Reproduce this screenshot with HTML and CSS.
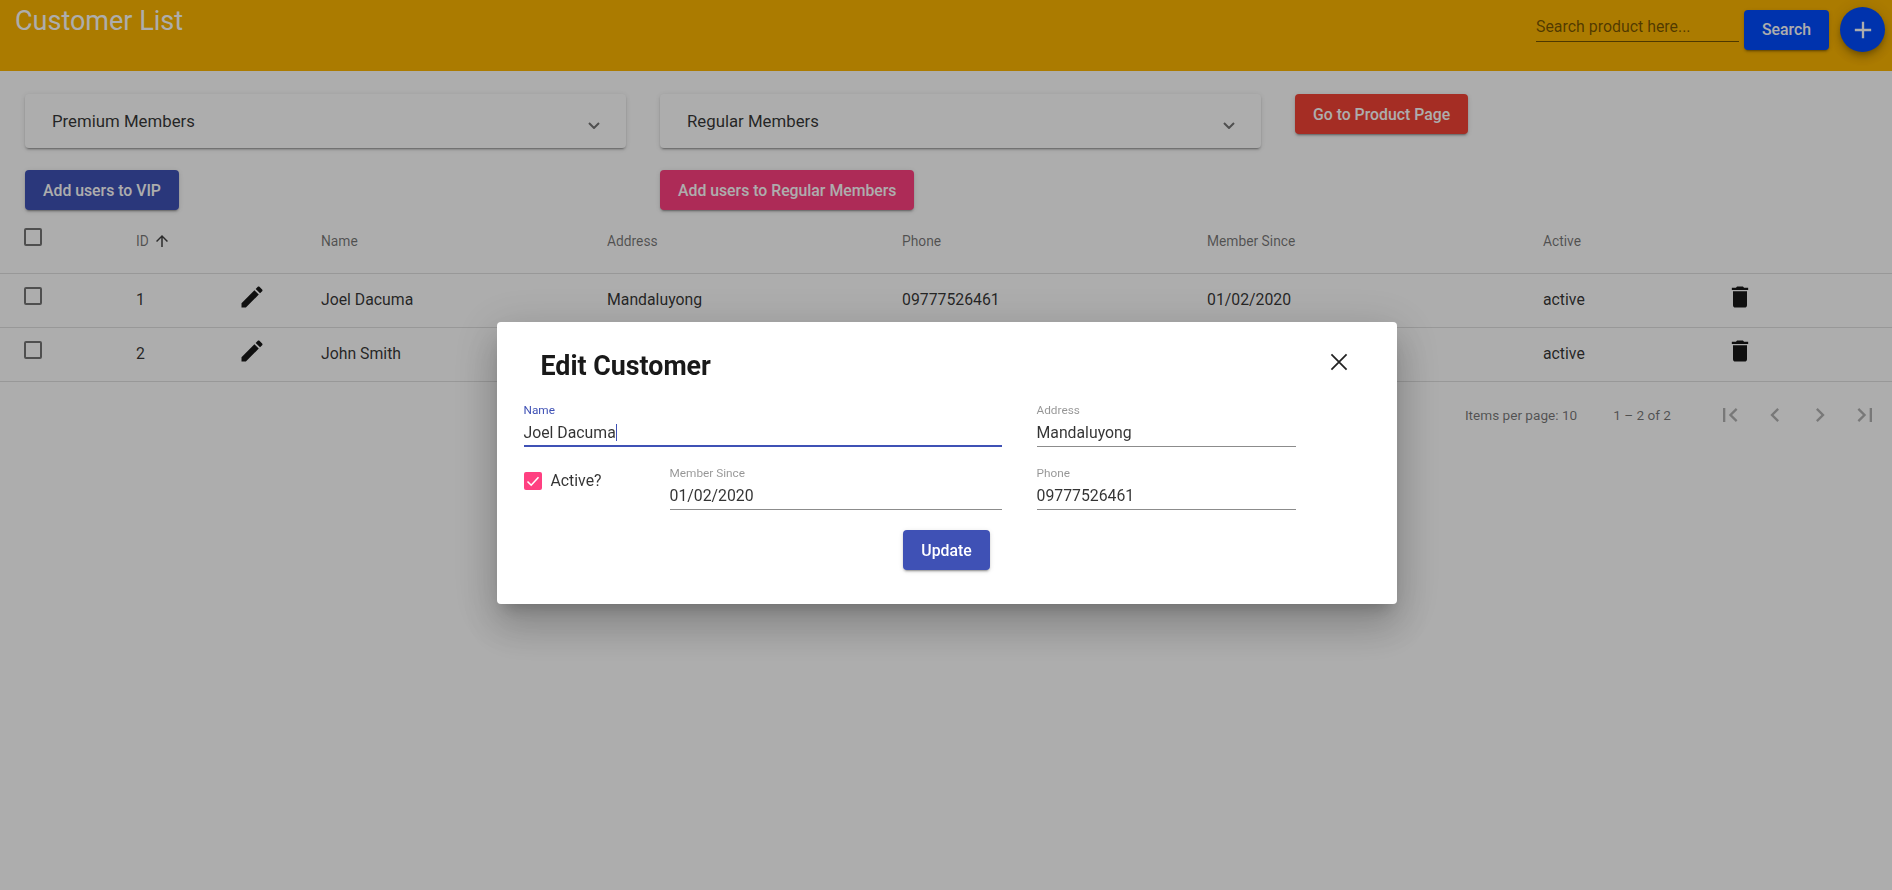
FILE: index.html
```html
<!DOCTYPE html>
<html lang="en">
<head>
    <meta charset="UTF-8">
    <meta name="viewport" content="width=device-width, initial-scale=1.0">
    <title>Customer List</title>
    <link rel="stylesheet" href="styles.css">
</head>
<body>
    <header class="toolbar">
        <h1 class="toolbar-title">Customer List</h1>
        <div class="toolbar-actions">
            <input class="search-input" type="text" placeholder="Search product here...">
            <button class="btn btn-search">Search</button>
            <button class="fab">
                <svg class="icon" viewBox="0 0 24 24"><path d="M19 13h-6v6h-2v-6H5v-2h6V5h2v6h6v2z"/></svg>
            </button>
        </div>
    </header>

    <section class="groups">
        <div class="panel">
            <span>Premium Members</span>
            <svg class="chevron" viewBox="0 0 12 7"><path d="M1 1l5 5 5-5"/></svg>
        </div>
        <div class="panel">
            <span>Regular Members</span>
            <svg class="chevron" viewBox="0 0 12 7"><path d="M1 1l5 5 5-5"/></svg>
        </div>
        <button class="btn btn-warn">Go to Product Page</button>
        <button class="btn btn-primary">Add users to VIP</button>
        <button class="btn btn-accent">Add users to Regular Members</button>
    </section>

    <table class="customers">
        <colgroup>
            <col class="col-check">
            <col class="col-id">
            <col class="col-edit">
            <col class="col-name">
            <col class="col-address">
            <col class="col-phone">
            <col class="col-since">
            <col class="col-active">
            <col>
        </colgroup>
        <thead>
            <tr>
                <th><span class="check"></span></th>
                <th>
                    <span class="sort">ID
                        <svg class="sort-icon" viewBox="0 0 24 24"><path d="M4 12l1.41 1.41L11 7.83V20h2V7.83l5.58 5.59L20 12l-8-8-8 8z"/></svg>
                    </span>
                </th>
                <th></th>
                <th>Name</th>
                <th>Address</th>
                <th>Phone</th>
                <th>Member Since</th>
                <th>Active</th>
                <th></th>
            </tr>
        </thead>
        <tbody>
            <tr>
                <td><span class="check"></span></td>
                <td>1</td>
                <td>
                    <svg class="icon row-icon" viewBox="0 0 24 24"><path d="M3 17.25V21h3.75L17.81 9.94l-3.75-3.75L3 17.25zM20.71 7.04c.39-.39.39-1.02 0-1.41l-2.34-2.34c-.39-.39-1.02-.39-1.41 0l-1.83 1.83 3.75 3.75 1.83-1.83z"/></svg>
                </td>
                <td>Joel Dacuma</td>
                <td>Mandaluyong</td>
                <td>09777526461</td>
                <td>01/02/2020</td>
                <td>active</td>
                <td>
                    <svg class="icon row-icon" viewBox="0 0 24 24"><path d="M6 19c0 1.1.9 2 2 2h8c1.1 0 2-.9 2-2V7H6v12zM19 4h-3.5l-1-1h-5l-1 1H5v2h14V4z"/></svg>
                </td>
            </tr>
            <tr>
                <td><span class="check"></span></td>
                <td>2</td>
                <td>
                    <svg class="icon row-icon" viewBox="0 0 24 24"><path d="M3 17.25V21h3.75L17.81 9.94l-3.75-3.75L3 17.25zM20.71 7.04c.39-.39.39-1.02 0-1.41l-2.34-2.34c-.39-.39-1.02-.39-1.41 0l-1.83 1.83 3.75 3.75 1.83-1.83z"/></svg>
                </td>
                <td>John Smith</td>
                <td></td>
                <td></td>
                <td></td>
                <td>active</td>
                <td>
                    <svg class="icon row-icon" viewBox="0 0 24 24"><path d="M6 19c0 1.1.9 2 2 2h8c1.1 0 2-.9 2-2V7H6v12zM19 4h-3.5l-1-1h-5l-1 1H5v2h14V4z"/></svg>
                </td>
            </tr>
        </tbody>
    </table>

    <div class="paginator">
        <span>Items per page: 10</span>
        <span class="range">1 – 2 of 2</span>
        <span class="page-btn"><svg class="icon" viewBox="0 0 24 24"><path d="M18.41 16.59L13.82 12l4.59-4.59L17 6l-6 6 6 6zM6 6h2v12H6z"/></svg></span>
        <span class="page-btn"><svg class="icon" viewBox="0 0 24 24"><path d="M15.41 7.41L14 6l-6 6 6 6 1.41-1.41L10.83 12z"/></svg></span>
        <span class="page-btn"><svg class="icon" viewBox="0 0 24 24"><path d="M10 6L8.59 7.41 13.17 12l-4.58 4.59L10 18l6-6z"/></svg></span>
        <span class="page-btn"><svg class="icon" viewBox="0 0 24 24"><path d="M5.59 7.41L10.18 12l-4.59 4.59L7 18l6-6-6-6zM16 6h2v12h-2z"/></svg></span>
    </div>

    <!-- Edit dialog -->
    <div class="backdrop">
        <div class="dialog">
            <div class="dialog-head">
                <h2 class="dialog-title">Edit Customer</h2>
                <svg class="close-icon" viewBox="0 0 24 24"><path d="M5.5 5.5l13 13M18.5 5.5l-13 13"/></svg>
            </div>
            <div class="dialog-form">
                <div class="field field-focus">
                    <label>Name</label>
                    <div class="field-value">Joel Dacuma<span class="caret"></span></div>
                </div>
                <div class="field">
                    <label>Address</label>
                    <div class="field-value">Mandaluyong</div>
                </div>
                <div class="active-row">
                    <div class="active-check">
                        <span class="check-on">
                            <svg viewBox="0 0 18 18"><path d="M3.5 9.5l3.7 3.7 7.3-8"/></svg>
                        </span>
                        <span>Active?</span>
                    </div>
                    <div class="field">
                        <label>Member Since</label>
                        <div class="field-value">01/02/2020</div>
                    </div>
                </div>
                <div class="field">
                    <label>Phone</label>
                    <div class="field-value">09777526461</div>
                </div>
            </div>
            <div class="dialog-actions">
                <button class="btn btn-primary">Update</button>
            </div>
        </div>
    </div>
</body>
</html>
```

FILE: styles.css
```css
body {
    font-family: Roboto, sans-serif;
    margin: 0;
    min-height: 100vh;
    background-color: #fff;
    color: rgba(0, 0, 0, 0.8);
    font-size: 15.8px;
    overflow: hidden;
}

.icon {
    display: block;
    width: 28px;
    height: 28px;
    fill: currentColor;
}

/* Toolbar */
.toolbar {
    display: flex;
    justify-content: space-between;
    align-items: flex-start;
    height: 71px;
    padding: 0 7px 0 15px;
    background-color: #fdb600;
    color: #fff;
}

.toolbar-title {
    margin: 5px 0 0;
    font-size: 27px;
    font-weight: 400;
    line-height: 32px;
}

.toolbar-actions {
    display: flex;
    align-items: center;
    padding-top: 7px;
}

.search-input {
    width: 203px;
    height: 30px;
    box-sizing: border-box;
    margin: 0 5px 5px 0;
    padding: 0;
    border: none;
    border-bottom: 1px solid rgba(0, 0, 0, 0.54);
    outline: none;
    background: transparent;
    font-family: inherit;
    font-size: 15.9px;
}

.search-input::placeholder {
    color: rgba(0, 0, 0, 0.54);
}

.btn {
    height: 40px;
    padding: 0 18px;
    border: none;
    border-radius: 4px;
    color: #fff;
    font-family: inherit;
    font-size: 15.8px;
    font-weight: 500;
    box-shadow: 0 3px 1px -2px rgba(0, 0, 0, 0.2), 0 2px 2px 0 rgba(0, 0, 0, 0.14), 0 1px 5px 0 rgba(0, 0, 0, 0.12);
}

.btn-search {
    width: 85px;
    padding: 0;
    background-color: #004cff;
}

.btn-primary {
    background-color: #3f51b5;
}

.btn-accent {
    background-color: #ff4081;
}

.btn-warn {
    background-color: #f44336;
}

.fab {
    display: flex;
    align-items: center;
    justify-content: center;
    width: 45px;
    height: 45px;
    margin-left: 11px;
    padding: 0;
    border: none;
    border-radius: 50%;
    background-color: #004cff;
    color: #fff;
    box-shadow: 0 3px 5px -1px rgba(0, 0, 0, 0.2), 0 6px 10px 0 rgba(0, 0, 0, 0.14), 0 1px 18px 0 rgba(0, 0, 0, 0.12);
}

/* Member groups */
.groups {
    display: grid;
    grid-template-columns: 601px 601px auto;
    justify-content: start;
    justify-items: start;
    align-items: start;
    column-gap: 34px;
    row-gap: 22px;
    padding: 23px 25px 0;
}

.panel {
    display: flex;
    align-items: center;
    justify-content: space-between;
    box-sizing: border-box;
    width: 100%;
    height: 54px;
    padding: 0 26px 0 27px;
    border-radius: 4px;
    background-color: #fff;
    font-size: 16.8px;
    box-shadow: 0 3px 1px -2px rgba(0, 0, 0, 0.2), 0 2px 2px 0 rgba(0, 0, 0, 0.14), 0 1px 5px 0 rgba(0, 0, 0, 0.12);
}

.chevron {
    width: 12px;
    height: 7px;
    margin-top: 8px;
    fill: none;
    stroke: rgba(0, 0, 0, 0.54);
    stroke-width: 2;
}

.groups .btn-primary,
.groups .btn-accent {
    grid-row: 2;
}

.groups .btn-accent {
    grid-column: 2;
}

/* Table */
.customers {
    width: 100%;
    border-collapse: collapse;
    table-layout: fixed;
}

.col-check { width: 136px; }
.col-id { width: 105px; }
.col-edit { width: 80px; }
.col-name { width: 286px; }
.col-address { width: 295px; }
.col-phone { width: 305px; }
.col-since { width: 336px; }
.col-active { width: 189px; }

.customers th,
.customers td {
    padding: 0;
    border-bottom: 1px solid rgba(0, 0, 0, 0.12);
    text-align: left;
}

.customers th {
    height: 61px;
    padding-bottom: 2px;
    color: rgba(0, 0, 0, 0.54);
    font-size: 13.8px;
    font-weight: 400;
}

.customers td {
    height: 50px;
    padding-bottom: 3px;
    font-size: 15.8px;
}

.customers th:first-child,
.customers td:first-child {
    padding-left: 24px;
}

.check {
    display: block;
    box-sizing: border-box;
    width: 18px;
    height: 18px;
    margin-bottom: 7px;
    border: 2px solid rgba(0, 0, 0, 0.54);
    border-radius: 2px;
}

.sort {
    display: flex;
    align-items: center;
    gap: 4px;
}

.sort-icon {
    width: 18px;
    height: 18px;
    fill: rgba(0, 0, 0, 0.75);
}

.row-icon {
    margin: 0 0 4px -3px;
    color: rgba(0, 0, 0, 0.9);
}

.customers td:last-child .row-icon {
    margin-left: -6px;
}

/* Paginator */
.paginator {
    display: flex;
    align-items: center;
    justify-content: flex-end;
    height: 65px;
    padding-right: 5px;
    color: rgba(0, 0, 0, 0.54);
    font-size: 13.6px;
}

.range {
    margin: 0 36px;
}

.page-btn {
    display: flex;
    justify-content: center;
    width: 45px;
    color: rgba(0, 0, 0, 0.3);
}

/* Dialog */
.backdrop {
    position: fixed;
    inset: 0;
    display: flex;
    align-items: flex-start;
    justify-content: center;
    padding-top: 322px;
    background-color: rgba(0, 0, 0, 0.32);
}

.dialog {
    box-sizing: border-box;
    width: 900px;
    height: 282px;
    margin-left: 1px;
    padding: 28px 101px 0 27px;
    border-radius: 4px;
    background-color: #fff;
    box-shadow: 0 11px 15px -7px rgba(0, 0, 0, 0.2), 0 24px 38px 3px rgba(0, 0, 0, 0.14), 0 9px 46px 8px rgba(0, 0, 0, 0.12);
}

.dialog-head {
    display: flex;
    align-items: flex-start;
    justify-content: space-between;
    height: 53px;
    padding: 0 0 0 17px;
    margin-right: -57px;
}

.dialog-title {
    margin: 0;
    color: rgba(0, 0, 0, 0.9);
    font-size: 26.8px;
    font-weight: 700;
    line-height: 32px;
}

.close-icon {
    display: block;
    width: 28px;
    height: 28px;
    margin-top: -2px;
    fill: none;
    stroke: #222;
    stroke-width: 1.5;
}

.dialog-form {
    display: grid;
    grid-template-columns: 478px 259px;
    column-gap: 35px;
    row-gap: 19px;
}

.field label {
    display: block;
    color: rgba(0, 0, 0, 0.42);
    font-size: 11.8px;
    line-height: 14px;
}

.field-value {
    height: 30px;
    box-sizing: border-box;
    padding-top: 4px;
    border-bottom: 1px solid rgba(0, 0, 0, 0.45);
    font-size: 15.8px;
    line-height: 24px;
}

.field-focus label {
    color: #3f51b5;
}

.field-focus .field-value {
    border-bottom: 2px solid #3f51b5;
}

.caret {
    display: inline-block;
    width: 1px;
    height: 17px;
    background-color: #3f51b5;
    vertical-align: -3px;
}

.active-row {
    display: flex;
}

.active-row .field {
    flex: 1;
}

.active-check {
    display: flex;
    align-items: center;
    align-self: flex-start;
    gap: 9px;
    width: 146px;
    margin-top: 5px;
}

.check-on {
    width: 18px;
    height: 18px;
    border-radius: 2px;
    background-color: #ff4081;
}

.check-on svg {
    display: block;
    fill: none;
    stroke: #fff;
    stroke-width: 1.6;
}

.dialog-actions {
    display: flex;
    justify-content: center;
    margin: 20px -101px 0 -27px;
}
```
